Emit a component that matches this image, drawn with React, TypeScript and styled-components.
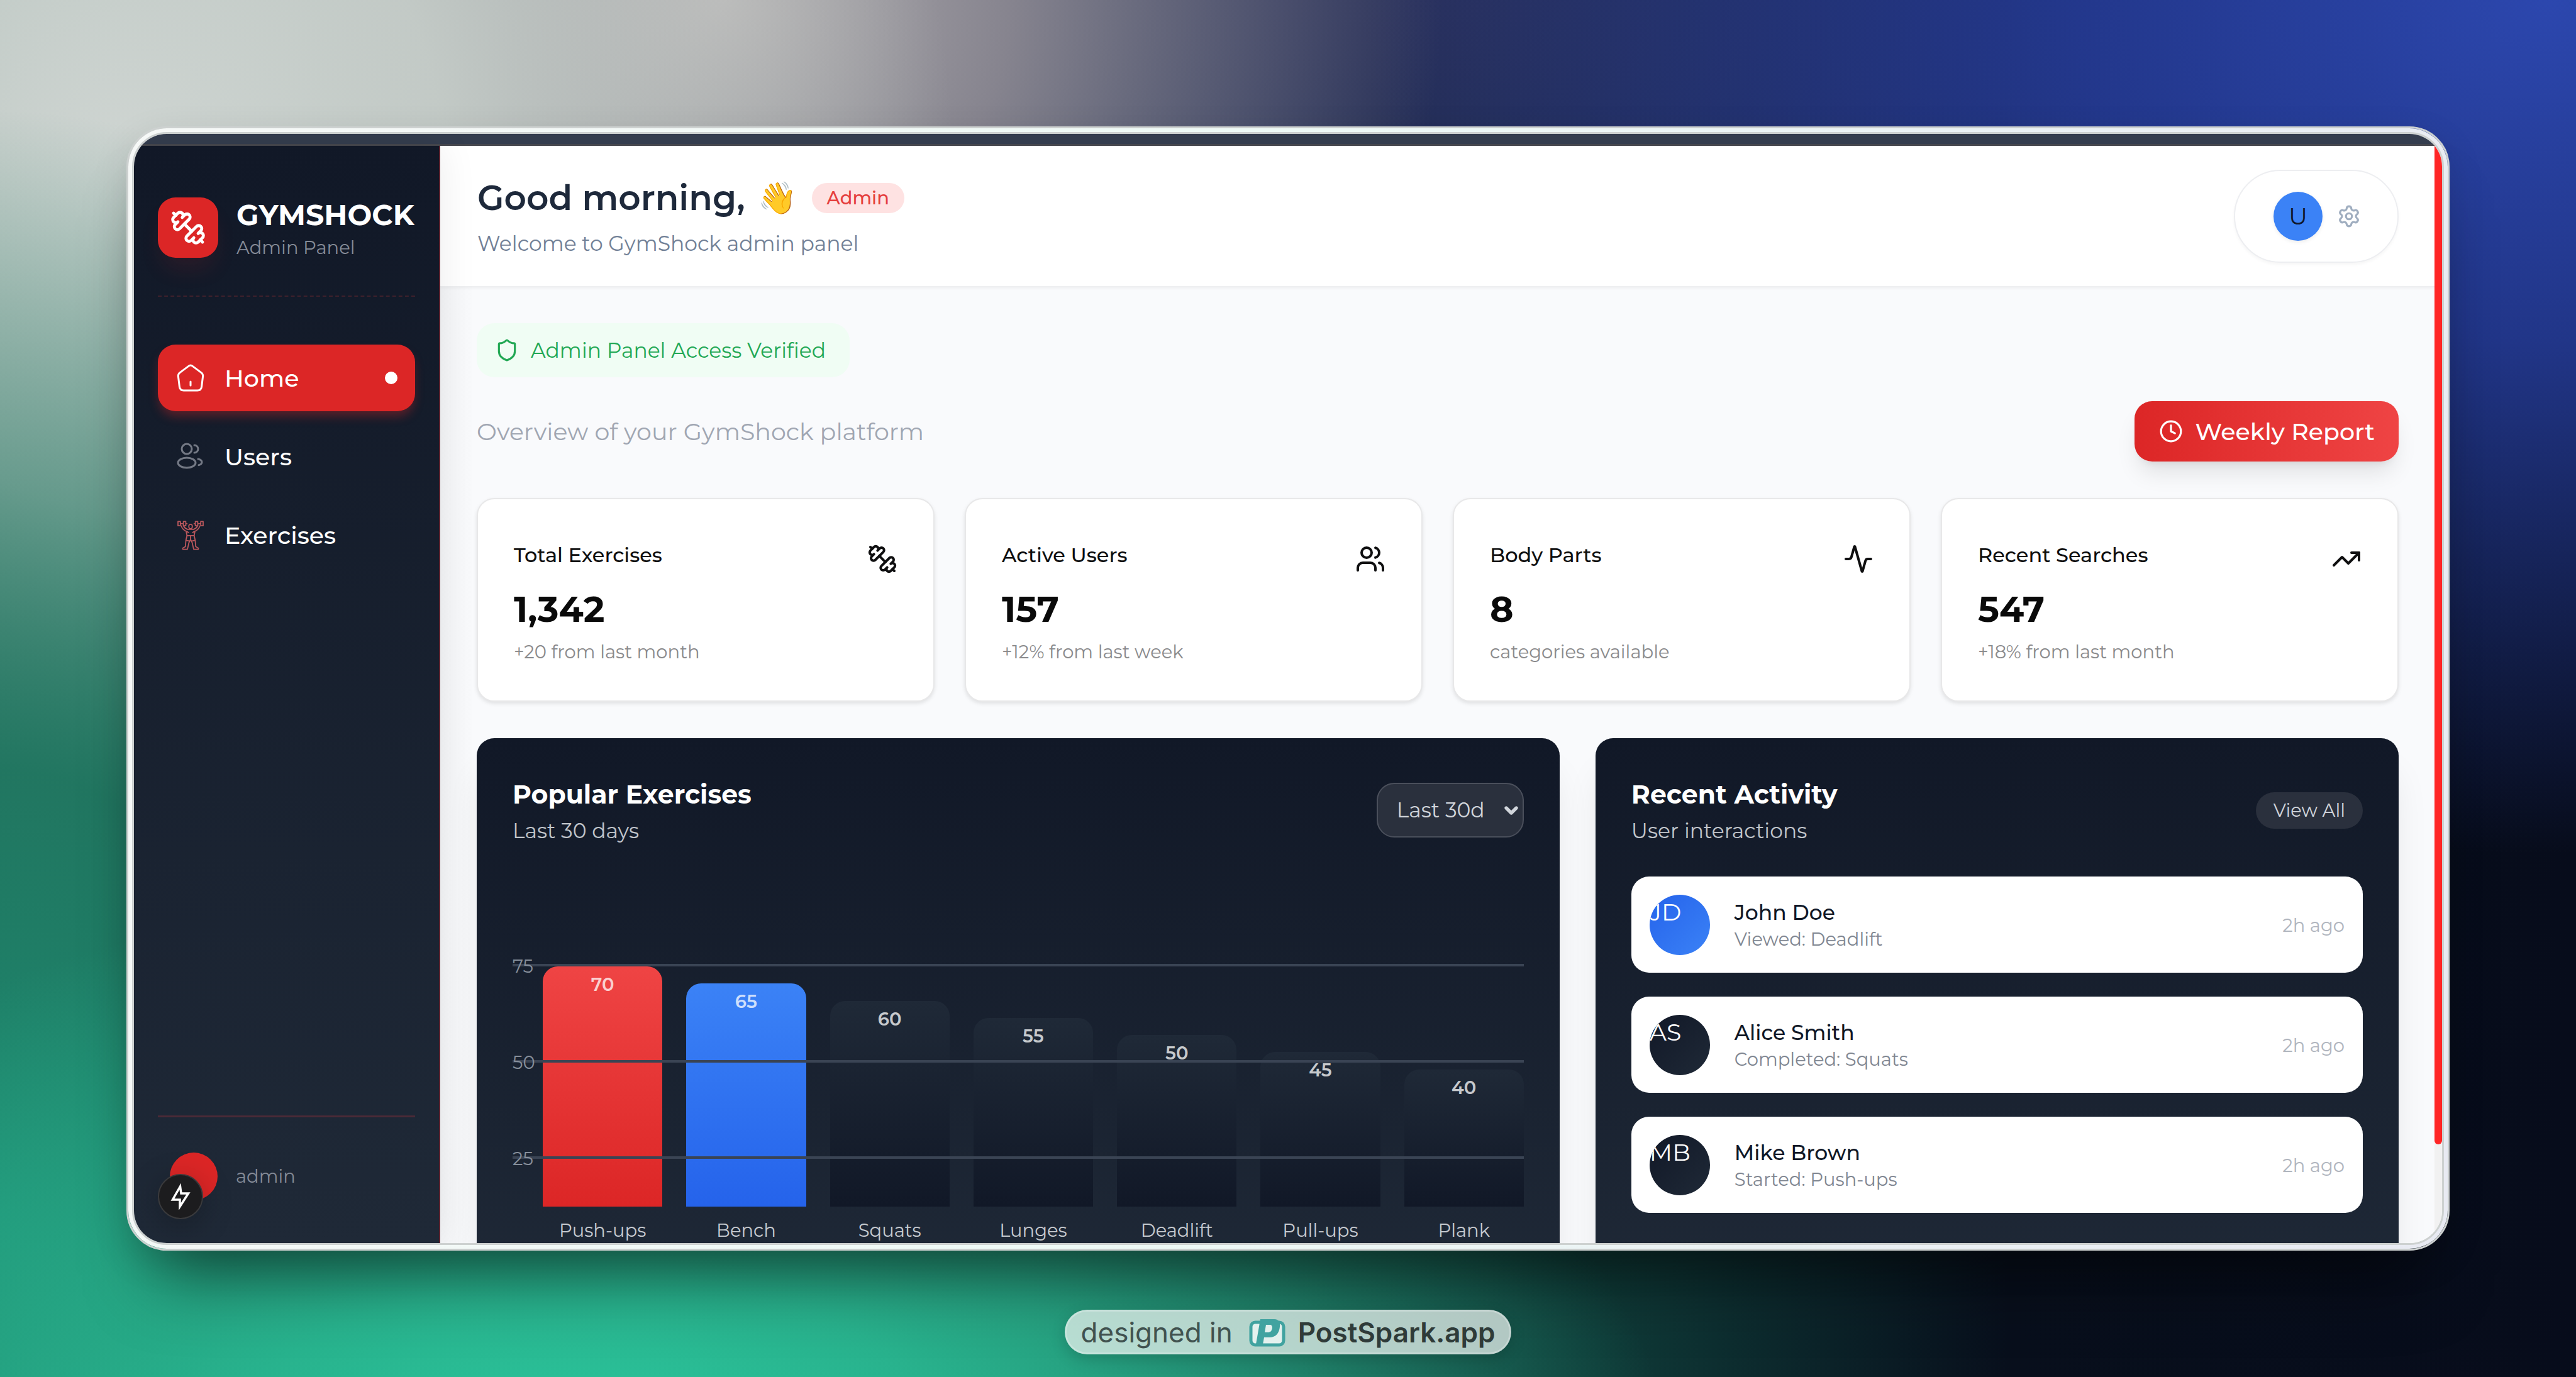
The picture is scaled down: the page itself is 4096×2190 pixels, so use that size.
import React from "react";
import styled, { createGlobalStyle, css } from "styled-components";
import { Activity, ChevronDown, Clock, Settings, Shield, TrendingUp, Users } from "lucide-react";

const GlobalStyle = createGlobalStyle`
  *, *::before, *::after { box-sizing: border-box; }
  body { margin: 0; }
  h1, h2, p, ul { margin: 0; padding: 0; }
  ul { list-style: none; }
  a { color: inherit; text-decoration: none; }
  button, select { font: inherit; border: 0; padding: 0; cursor: pointer; }
  svg { display: block; flex: none; }
`;

/* ---------- backdrop and window ---------- */

const Backdrop = styled.div`
  display: grid;
  grid-template-rows: 201px minmax(0, 1fr) 201px;
  height: 100vh;
  padding: 0 201px;
  overflow: hidden;
  font-family: Montserrat, Inter, "Open Sans", sans-serif;
  background:
    radial-gradient(ellipse 42% 44% at 23% 108%, #2ccba0 0%, rgba(42, 190, 150, 0.85) 35%, rgba(31, 140, 112, 0) 100%),
    radial-gradient(ellipse 30% 80% at 0% 88%, #1f8a70 0%, rgba(29, 116, 94, 0.95) 40%, rgba(31, 120, 98, 0) 100%),
    radial-gradient(ellipse 32% 66% at 5% 12%, #cfd5d2 0%, rgba(198, 205, 201, 0.95) 38%, rgba(150, 170, 162, 0) 100%),
    radial-gradient(ellipse 28% 50% at 28% 0%, #b5b2b3 0%, rgba(152, 147, 153, 0.85) 40%, rgba(95, 92, 110, 0) 100%),
    radial-gradient(ellipse 46% 62% at 99% 0%, #2c47ae 0%, rgba(36, 58, 148, 0.9) 40%, rgba(18, 26, 80, 0) 100%),
    radial-gradient(ellipse 44% 46% at 56% 0%, #29305a 0%, rgba(32, 40, 82, 0.9) 45%, rgba(20, 30, 70, 0) 100%),
    linear-gradient(90deg, #23705d 0%, #1f6b58 40%, #0f3b38 62%, #080f1c 78%, #070c1b 100%);
`;

const Rim = styled.div`
  grid-row: 2;
  min-height: 0;
  padding: 6px;
  border: 3px solid #cdd1d0;
  border-radius: 64px;
  background: linear-gradient(100deg, #f6f8f7 0%, #eefaf6 45%, #e8eaf2 100%);
  background-clip: padding-box;
  box-shadow: 0 90px 110px -50px rgba(0, 0, 0, 0.5), 0 20px 60px rgba(0, 0, 0, 0.12);
`;

const Screen = styled.div`
  display: flex;
  flex-direction: column;
  height: 100%;
  overflow: hidden;
  border: 3px solid #cdd1d0;
  border-radius: 55px;
  background: #f9fafc;
`;

const BrowserEdge = styled.div`
  flex: none;
  height: 19px;
  background: #343d4e;
  border-bottom: 3px solid #45464d;
`;

const Workspace = styled.div`
  display: flex;
  flex: 1;
  min-height: 0;
`;

const ScrollTrack = styled.div`
  flex: none;
  width: 12px;
  background: #f1f1f1;
`;

const ScrollThumb = styled.div`
  height: 91%;
  background: #ff2626;
  border-radius: 0 0 6px 6px;
`;

/* ---------- sidebar ---------- */

const Sidebar = styled.aside`
  position: relative;
  display: flex;
  flex-direction: column;
  flex: none;
  width: 487px;
  padding: 82px 38px 68px;
  border-right: 2px solid #5c2430;
  background: linear-gradient(180deg, #111827 0%, #1f2937 100%);
  box-shadow: 0 0 58px rgba(0, 0, 0, 0.08);
`;

const Brand = styled.div`
  display: flex;
  align-items: flex-start;
  gap: 29px;
  padding-bottom: 52px;
  border-bottom: 2px dashed #3d202c;
`;

const BrandMark = styled.div`
  display: grid;
  place-items: center;
  flex: none;
  width: 96px;
  height: 96px;
  border-radius: 28px;
  color: #fff;
  background: #dc2626;
  box-shadow: 0 24px 36px -7px rgba(220, 38, 38, 0.12);
`;

const BrandName = styled.p`
  color: #fff;
  font-size: 46px;
  font-weight: 700;
  line-height: 56px;
`;

const SmallMuted = styled.p`
  color: #858b97;
  font-size: 29px;
  line-height: 48px;
`;

const Nav = styled.nav`
  display: flex;
  flex-direction: column;
  gap: 19px;
  margin-top: 76px;
`;

const NavLink = styled.a<{ $active?: boolean }>`
  display: flex;
  align-items: center;
  gap: 30px;
  height: 106px;
  padding: 0 28px;
  border-radius: 28px;
  color: #fff;
  font-size: 38px;
  font-weight: 500;
  ${(p) => p.$active && css`
    background: #dc2626;
    box-shadow: 0 10px 16px -2px rgba(220, 38, 38, 0.35);
  `}
`;

const ActiveDot = styled.span`
  width: 20px;
  height: 20px;
  margin-left: auto;
  border-radius: 50%;
  background: #fff;
`;

const Account = styled.div`
  position: relative;
  display: flex;
  align-items: center;
  gap: 29px;
  margin-top: auto;
  padding: 56px 0 0 19px;
  border-top: 3px solid #4a2a37;
`;

const AccountAvatar = styled.div`
  width: 76px;
  height: 76px;
  border-radius: 50%;
  background: #dc2626;
`;

const QuickButton = styled.button`
  position: absolute;
  left: 0;
  bottom: -30px;
  display: grid;
  place-items: center;
  width: 72px;
  height: 72px;
  border: 2px solid #3a3a3c;
  border-radius: 50%;
  color: #fff;
  background: #1c1c1e;
  box-shadow: 0 10px 48px rgba(0, 0, 0, 0.25);
`;

/* ---------- main column ---------- */

const Main = styled.main`
  flex: 1;
  min-width: 0;
  overflow: hidden;
  background: linear-gradient(90deg, #f4f5f7 0, #f9fafc 50px);
`;

const Header = styled.header`
  display: flex;
  align-items: center;
  justify-content: space-between;
  height: 225px;
  padding: 0 57px 0 59px;
  border-bottom: 2px solid #eeeff1;
  background: #fff;
  box-shadow: 0 2px 5px rgba(0, 0, 0, 0.04);
`;

const GreetingRow = styled.div`
  display: flex;
  align-items: center;
  gap: 24px;
  margin-bottom: 10px;
`;

const Greeting = styled.h1`
  display: flex;
  align-items: center;
  gap: 20px;
  color: #1e293b;
  font-size: 55px;
  font-weight: 600;
  line-height: 77px;
`;

const Wave = styled.span`
  font-size: 50px;
`;

const RoleBadge = styled.span`
  padding: 0 24px;
  border-radius: 24px;
  color: #e53e3e;
  background: #fee2e2;
  font-size: 29px;
  font-weight: 500;
  line-height: 48px;
`;

const Welcome = styled.p`
  color: #718096;
  font-size: 33px;
  line-height: 48px;
`;

const ProfilePill = styled.div`
  display: flex;
  align-items: center;
  gap: 23px;
  height: 148px;
  padding: 0 58px 0 61px;
  border: 2px solid #edeef1;
  border-radius: 74px;
  background: #fff;
  box-shadow: 0 3px 5px rgba(0, 0, 0, 0.04);
`;

const ProfileAvatar = styled.button`
  width: 78px;
  height: 78px;
  border-radius: 50%;
  color: #0f172a;
  background: #3b82f6;
  box-shadow: 0 2px 6px rgba(0, 0, 0, 0.08);
  font-size: 38px;
`;

const IconButton = styled.button`
  color: #a0aec0;
  background: none;
`;

const Content = styled.div`
  padding: 57px 57px 0 58px;
`;

const VerifiedNote = styled.p`
  display: flex;
  align-items: center;
  gap: 19px;
  width: fit-content;
  height: 86px;
  padding: 0 38px 0 29px;
  border-radius: 28px;
  color: #22a854;
  background: #f0fdf4;
  font-size: 33px;
`;

const OverviewBar = styled.div`
  display: flex;
  align-items: center;
  justify-content: space-between;
  margin: 38px 0 58px;
`;

const OverviewText = styled.p`
  color: #a0a6b2;
  font-size: 38px;
`;

const ReportButton = styled.button`
  display: flex;
  align-items: center;
  gap: 20px;
  height: 96px;
  padding: 0 38px 0 39px;
  border-radius: 28px;
  color: #fff;
  background: linear-gradient(90deg, #dc2626, #ef4444);
  box-shadow: 0 24px 36px -7px rgba(0, 0, 0, 0.1), 0 10px 14px -10px rgba(0, 0, 0, 0.1);
  font-size: 38px;
  font-weight: 500;
`;

const StatGrid = styled.div`
  display: grid;
  grid-template-columns: repeat(4, minmax(0, 1fr));
  gap: 48px;
`;

const StatCard = styled.section`
  padding: 57px 57px 51px;
  border: 2px solid #e8e8e9;
  border-radius: 28px;
  background: #fff;
  box-shadow: 0 3px 6px rgba(0, 0, 0, 0.1);
`;

const StatHead = styled.div`
  display: flex;
  align-items: center;
  justify-content: space-between;
  height: 76px;
  color: #0f0f10;
`;

const StatTitle = styled.h2`
  padding-bottom: 14px;
  font-size: 32px;
  font-weight: 500;
`;

const StatValue = styled.p`
  color: #0a0a0a;
  font-size: 57px;
  font-weight: 700;
  line-height: 84px;
`;

const StatNote = styled.p`
  color: #8a8a8c;
  font-size: 29px;
  line-height: 52px;
`;

const PanelGrid = styled.div`
  display: grid;
  grid-template-columns: repeat(7, minmax(0, 1fr));
  gap: 57px;
  margin-top: 58px;
`;

const Panel = styled.section<{ $span: number }>`
  grid-column: span ${(p) => p.$span};
  min-height: 896px;
  padding: 58px 57px;
  border-radius: 28px;
  background: linear-gradient(180deg, #111827 0%, #1f2937 100%);
  box-shadow: 0 48px 60px -12px rgba(0, 0, 0, 0.1);
`;

const PanelHead = styled.div`
  display: flex;
  align-items: center;
  justify-content: space-between;
  height: 116px;
`;

const PanelTitle = styled.h2`
  color: #fff;
  font-size: 41px;
  font-weight: 700;
  line-height: 62px;
`;

const PanelSubtitle = styled.p`
  color: #c0c4ca;
  font-size: 33px;
  line-height: 54px;
`;

const RangeField = styled.label`
  position: relative;
  display: block;
  margin-bottom: 4px;
  color: #d1d5db;
`;

const RangeSelect = styled.select`
  display: block;
  appearance: none;
  width: 234px;
  height: 87px;
  padding: 0 0 0 30px;
  border: 2px solid #4a4f5b;
  border-radius: 28px;
  color: inherit;
  background: #2a303d;
  font-size: 33px;
`;

const RangeArrow = styled(ChevronDown)`
  position: absolute;
  right: 4px;
  top: 28px;
  pointer-events: none;
`;

const Chart = styled.div`
  position: relative;
  height: 612px;
  margin-top: 36px;
`;

const GridLine = styled.div<{ $level: number }>`
  position: absolute;
  z-index: 1;
  left: 0;
  right: 0;
  bottom: ${(p) => p.$level}%;
  border-bottom: 4px solid #3a4454;
`;

const GridLabel = styled.span<{ $level: number }>`
  position: absolute;
  z-index: 2;
  left: 0;
  bottom: ${(p) => p.$level}%;
  color: #868e9a;
  font-size: 29px;
  line-height: 34px;
  transform: translateY(50%);
`;

const Bars = styled.div`
  display: flex;
  align-items: flex-end;
  gap: 38px;
  height: 100%;
  padding: 0 0 20px 48px;
`;

const BarColumn = styled.div`
  flex: 1;
  min-width: 0;
  text-align: center;
`;

const tones = {
  red: "linear-gradient(180deg, #ef4444, #dc2626)",
  blue: "linear-gradient(180deg, #3b82f6, #2563eb)",
  dark: "linear-gradient(180deg, #1f2937, #111827)",
};

const Bar = styled.div<{ $tone: keyof typeof tones }>`
  padding-top: 10px;
  border-radius: 24px 24px 0 0;
  color: rgba(255, 255, 255, 0.76);
  background: ${(p) => tones[p.$tone]};
  font-size: 29px;
  font-weight: 600;
  line-height: 38px;
`;

const BarLabel = styled.p`
  margin-top: 19px;
  color: #c6cad0;
  font-size: 29px;
  line-height: 38px;
`;

const ViewAll = styled.button`
  padding: 0 28px;
  border-radius: 29px;
  margin-bottom: 2px;
  color: #d1d5db;
  background: #2a303d;
  font-size: 29px;
  line-height: 58px;
`;

const ActivityList = styled.ul`
  display: grid;
  gap: 38px;
  margin-top: 46px;
`;

const ActivityItem = styled.li`
  display: flex;
  align-items: center;
  padding: 29px 29px 28px;
  border-radius: 28px;
  background: #fff;
`;

const Initials = styled.div<{ $blue?: boolean }>`
  width: 96px;
  height: 96px;
  overflow: hidden;
  border-radius: 50%;
  color: #fff;
  background: ${(p) => (p.$blue ? "linear-gradient(135deg, #2563eb, #3b82f6)" : "linear-gradient(135deg, #111827, #1f2937)")};
  font-size: 38px;
  line-height: 56px;
`;

const ActivityText = styled.div`
  flex: 1;
  margin-left: 39px;
`;

const PersonName = styled.p`
  color: #111827;
  font-size: 33px;
  font-weight: 500;
  line-height: 46px;
`;

const ActionText = styled.p`
  color: #7f8691;
  font-size: 29px;
  line-height: 40px;
`;

const TimeText = styled.time`
  color: #b0b5be;
  font-size: 29px;
`;

/* ---------- credit ---------- */

const CreditBar = styled.footer`
  grid-row: 3;
  display: flex;
  align-items: flex-start;
  justify-content: center;
  padding-top: 94px;
`;

const Credit = styled.a`
  display: flex;
  align-items: center;
  height: 71px;
  padding: 0 23px;
  border: 3px solid rgba(255, 255, 255, 0.25);
  border-radius: 36px;
  color: #41524f;
  background: rgba(240, 245, 243, 0.72);
  box-shadow: 0 8px 24px rgba(0, 0, 0, 0.16);
  font-family: Inter, sans-serif;
  font-size: 44px;
`;

const CreditName = styled.strong`
  color: #2f3b39;
  font-weight: 600;
`;

const CreditLogo = styled.svg`
  width: 58px;
  height: 46px;
  margin: 0 20px 0 26px;
`;

/* ---------- drawings ---------- */

const DumbbellIcon = ({ size }: { size: number }) => (
  <svg width={size} height={size} viewBox="0 0 24 24" fill="none" stroke="currentColor" strokeWidth="2" strokeLinecap="round" strokeLinejoin="round">
    <path d="M14.4 14.4 9.6 9.6" />
    <path d="M18.657 21.485a2 2 0 1 1-2.829-2.828l-1.767 1.768a2 2 0 1 1-2.829-2.829l6.364-6.364a2 2 0 1 1 2.829 2.829l-1.768 1.767a2 2 0 1 1 2.828 2.829z" />
    <path d="m21.5 21.5-1.4-1.4" />
    <path d="M3.9 3.9 2.5 2.5" />
    <path d="M6.404 12.768a2 2 0 1 1-2.829-2.829l1.768-1.767a2 2 0 1 1-2.828-2.829l2.828-2.828a2 2 0 1 1 2.829 2.828l1.767-1.768a2 2 0 1 1 2.829 2.829z" />
  </svg>
);

const BoltIcon = () => (
  <svg width="32" height="42" viewBox="0 0 32 42" fill="none" stroke="currentColor" strokeWidth="3.500" strokeLinejoin="miter">
    <path d="M15.500 5 3.500 26H15v11l13.500-21H17z" />
  </svg>
);

const HomeIcon = () => (
  <svg width="48" height="48" viewBox="0 0 24 24" fill="none" stroke="currentColor" strokeWidth="1.5" strokeLinecap="round">
    <path d="M12 2c.7 0 1.2.3 1.8.8l6.7 5c1 .8 1.5 1.700 1.300 3l-1 8.200c-.3 2.200-1.200 3-3.300 3h-11c-2.100 0-3-.8-3.300-3l-1-8.200c-.2-1.300.3-2.200 1.300-3l6.700-5C10.800 2.300 11.300 2 12 2z" />
    <path d="M12 15v3" />
  </svg>
);

const PeopleIcon = () => (
  <svg width="48" height="48" viewBox="0 0 24 24" fill="none" stroke="#747985" strokeWidth="1.5" strokeLinecap="round">
    <circle cx="9" cy="6" r="4" />
    <path d="M15 9a3 3 0 1 0 0-6" />
    <ellipse cx="9" cy="17" rx="7" ry="4" />
    <path d="M18 14c1.754.385 3 1.359 3 2.500 0 1.030-1.014 1.923-2.500 2.370" />
  </svg>
);

const LifterIcon = () => (
  <svg width="48" height="48" viewBox="0 0 24 24" fill="none" stroke="#b9575c" strokeWidth="0.9" strokeLinejoin="round" strokeLinecap="round">
    <path d="M2 1.200h1.900v3.400H2zM6.300 1.200h1.900v3.400H6.300zM15.800 1.200h1.900v3.400h-1.900zM20.100 1.200H22v3.400h-1.900zM3.900 2.900h2.400M17.700 2.900h2.400M8.200 2.900h1M14.800 2.900h1" />
    <path d="M4.600 4.700c.6 1.900 2 3.300 3.900 4.300l.7 3.400h5.600l.7-3.400c1.900-1 3.300-2.400 3.900-4.300M6.400 4.700c.6 1.300 1.600 2.200 3.200 2.700h4.800c1.600-.5 2.600-1.400 3.200-2.700M9 9l1.300 1M15 9l-1.300 1" />
    <path d="M10.600 5a1.400 1.600 0 0 1 2.800 0c0 1.200-.6 2-1.400 2s-1.400-.8-1.400-2z" />
    <path d="M9.200 12.400l-.9 3.700-.4 5-2.100 1.300v.9h3.700l1.200-5.200 1.300-2.600 1.300 2.600 1.200 5.200h3.700v-.9l-2.100-1.300-.4-5-.9-3.700M8.600 16.200l2.600.6M15.400 16.200l-2.600.6M12 12.600v2.700" />
  </svg>
);

const SparkLogo = () => (
  <CreditLogo viewBox="0 0 58 46" aria-hidden="true">
    <rect x="3" y="7" width="52" height="36" rx="7" fill="#e4f1ee" stroke="#41a3a0" strokeWidth="5" />
    <path fill="#41a3a0" fillRule="evenodd" d="M18 2h22c7 0 10 5 9 12-1 10-6 17-16 17h-9l-2 11H11zM27 11l-2 12h5c4 0 6-2 7-7 0-3-1-5-4-5z" />
  </CreditLogo>
);

/* ---------- data ---------- */

const stats = [
  { title: "Total Exercises", value: "1,342", note: "+20 from last month", Icon: DumbbellIcon },
  { title: "Active Users", value: "157", note: "+12% from last week", Icon: Users },
  { title: "Body Parts", value: "8", note: "categories available", Icon: Activity },
  { title: "Recent Searches", value: "547", note: "+18% from last month", Icon: TrendingUp },
];

const exercises: { name: string; count: number; tone: keyof typeof tones }[] = [
  { name: "Push-ups", count: 70, tone: "red" },
  { name: "Bench", count: 65, tone: "blue" },
  { name: "Squats", count: 60, tone: "dark" },
  { name: "Lunges", count: 55, tone: "dark" },
  { name: "Deadlift", count: 50, tone: "dark" },
  { name: "Pull-ups", count: 45, tone: "dark" },
  { name: "Plank", count: 40, tone: "dark" },
];

const tallestBar = 382;

const activity = [
  { initials: "JD", name: "John Doe", action: "Viewed: Deadlift", blue: true },
  { initials: "AS", name: "Alice Smith", action: "Completed: Squats", blue: false },
  { initials: "MB", name: "Mike Brown", action: "Started: Push-ups", blue: false },
];

export default function App() {
  return (
    <>
      <GlobalStyle />
      <Backdrop>
        <Rim>
          <Screen>
            <BrowserEdge />
            <Workspace>
              <Sidebar>
                <Brand>
                  <BrandMark><DumbbellIcon size={58} /></BrandMark>
                  <div>
                    <BrandName>GYMSHOCK</BrandName>
                    <SmallMuted>Admin Panel</SmallMuted>
                  </div>
                </Brand>
                <Nav>
                  <NavLink href="#home" $active><HomeIcon />Home<ActiveDot /></NavLink>
                  <NavLink href="#users"><PeopleIcon />Users</NavLink>
                  <NavLink href="#exercises"><LifterIcon />Exercises</NavLink>
                </Nav>
                <Account>
                  <AccountAvatar />
                  <SmallMuted>admin</SmallMuted>
                  <QuickButton aria-label="Quick actions"><BoltIcon /></QuickButton>
                </Account>
              </Sidebar>

              <Main>
                <Header>
                  <div>
                    <GreetingRow>
                      <Greeting>Good morning, <Wave>👋</Wave></Greeting>
                      <RoleBadge>Admin</RoleBadge>
                    </GreetingRow>
                    <Welcome>Welcome to GymShock admin panel</Welcome>
                  </div>
                  <ProfilePill>
                    <ProfileAvatar>U</ProfileAvatar>
                    <IconButton aria-label="Settings"><Settings size={38} /></IconButton>
                  </ProfilePill>
                </Header>

                <Content>
                  <VerifiedNote><Shield size={38} />Admin Panel Access Verified</VerifiedNote>
                  <OverviewBar>
                    <OverviewText>Overview of your GymShock platform</OverviewText>
                    <ReportButton><Clock size={38} />Weekly Report</ReportButton>
                  </OverviewBar>

                  <StatGrid>
                    {stats.map(({ title, value, note, Icon }) => (
                      <StatCard key={title}>
                        <StatHead>
                          <StatTitle>{title}</StatTitle>
                          <Icon size={48} />
                        </StatHead>
                        <StatValue>{value}</StatValue>
                        <StatNote>{note}</StatNote>
                      </StatCard>
                    ))}
                  </StatGrid>

                  <PanelGrid>
                    <Panel $span={4}>
                      <PanelHead>
                        <div>
                          <PanelTitle>Popular Exercises</PanelTitle>
                          <PanelSubtitle>Last 30 days</PanelSubtitle>
                        </div>
                        <RangeField>
                          <RangeSelect aria-label="Time range" defaultValue="30">
                            <option value="30">Last 30d</option>
                          </RangeSelect>
                          <RangeArrow size={32} strokeWidth={4} />
                        </RangeField>
                      </PanelHead>
                      <Chart>
                        {[75, 50, 25].map((level) => (
                          <React.Fragment key={level}>
                            <GridLabel $level={level}>{level}</GridLabel>
                            <GridLine $level={level} />
                          </React.Fragment>
                        ))}
                        <Bars>
                          {exercises.map(({ name, count, tone }) => (
                            <BarColumn key={name}>
                              <Bar $tone={tone} style={{ height: Math.round((count / 70) * tallestBar) }}>{count}</Bar>
                              <BarLabel>{name}</BarLabel>
                            </BarColumn>
                          ))}
                        </Bars>
                      </Chart>
                    </Panel>

                    <Panel $span={3}>
                      <PanelHead>
                        <div>
                          <PanelTitle>Recent Activity</PanelTitle>
                          <PanelSubtitle>User interactions</PanelSubtitle>
                        </div>
                        <ViewAll>View All</ViewAll>
                      </PanelHead>
                      <ActivityList>
                        {activity.map(({ initials, name, action, blue }) => (
                          <ActivityItem key={name}>
                            <Initials $blue={blue}>{initials}</Initials>
                            <ActivityText>
                              <PersonName>{name}</PersonName>
                              <ActionText>{action}</ActionText>
                            </ActivityText>
                            <TimeText>2h ago</TimeText>
                          </ActivityItem>
                        ))}
                      </ActivityList>
                    </Panel>
                  </PanelGrid>
                </Content>
              </Main>

              <ScrollTrack><ScrollThumb /></ScrollTrack>
            </Workspace>
          </Screen>
        </Rim>
        <CreditBar>
          <Credit href="#postspark">
            designed in
            <SparkLogo />
            <CreditName>PostSpark.app</CreditName>
          </Credit>
        </CreditBar>
      </Backdrop>
    </>
  );
}
